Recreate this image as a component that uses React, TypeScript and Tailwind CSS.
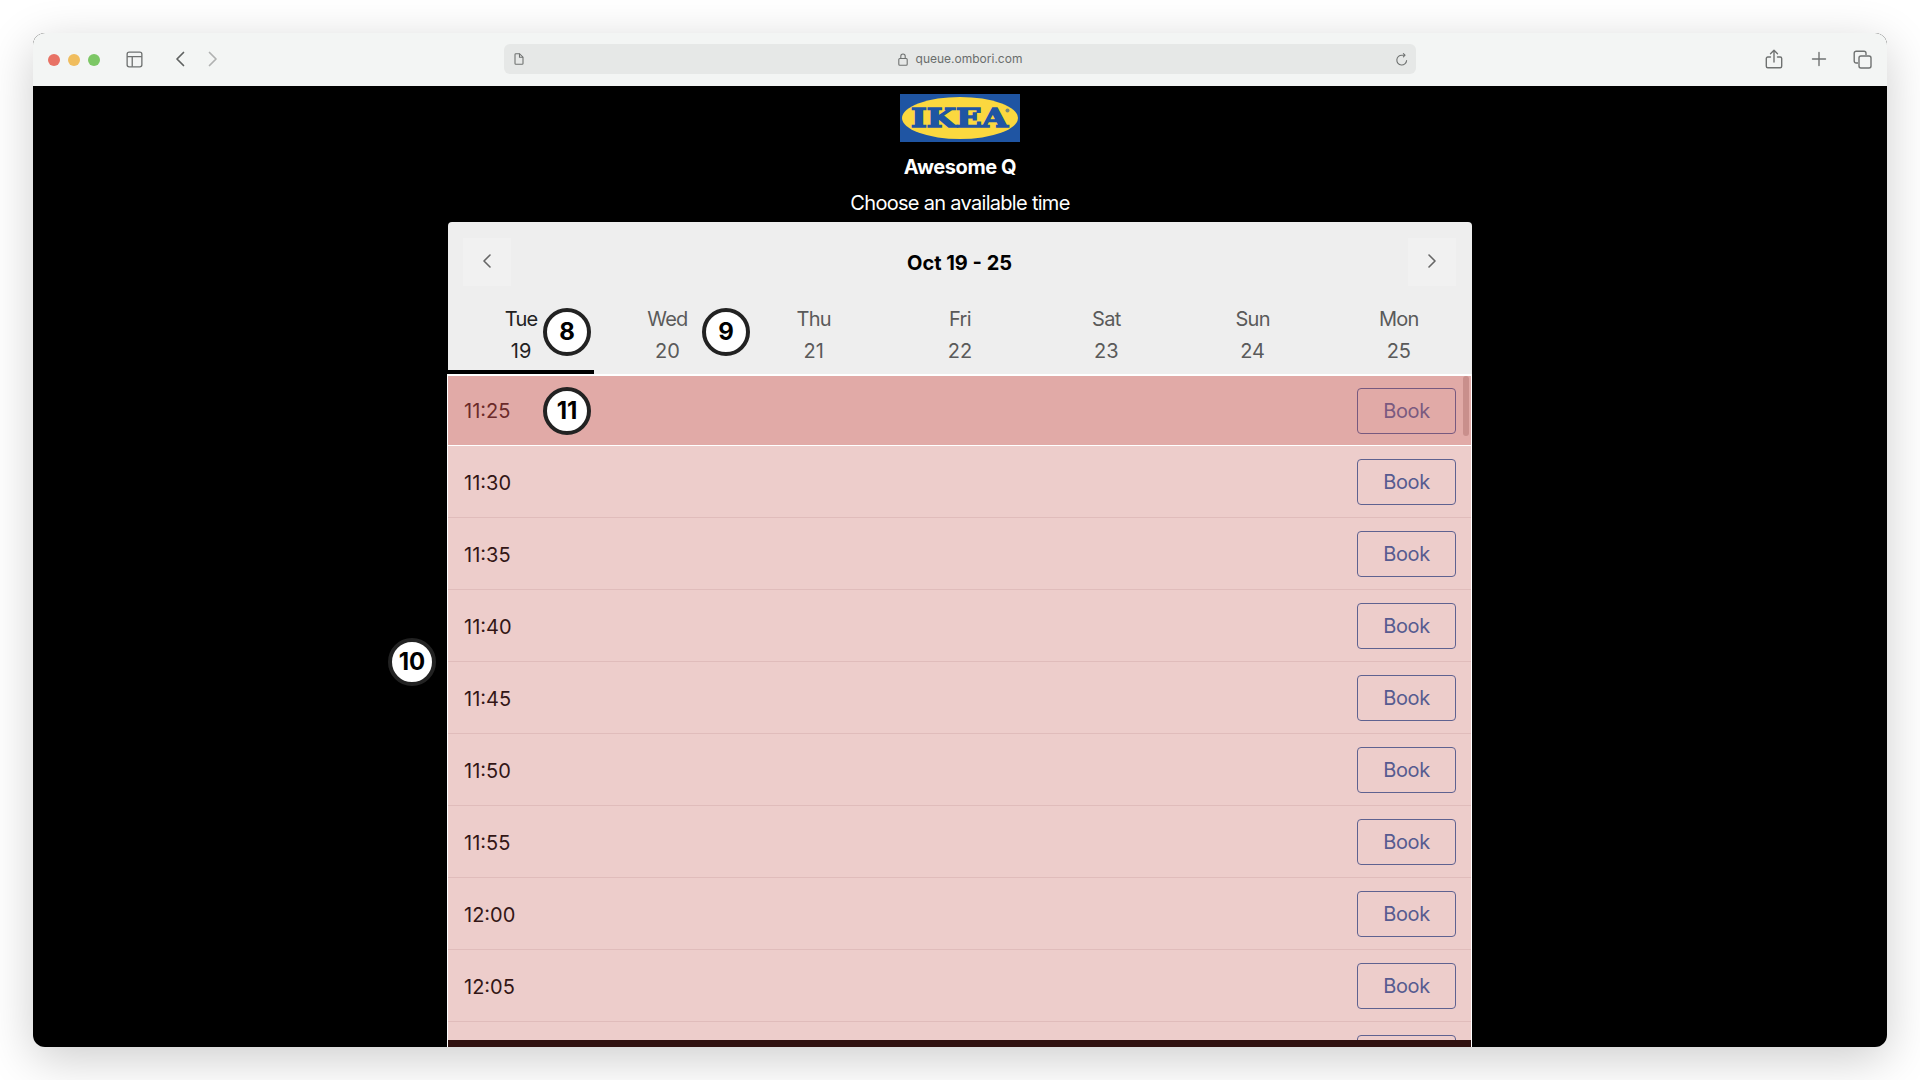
const days = [
  ["Tue", "19"],
  ["Wed", "20"],
  ["Thu", "21"],
  ["Fri", "22"],
  ["Sat", "23"],
  ["Sun", "24"],
  ["Mon", "25"],
];
const times = ["11:30", "11:35", "11:40", "11:45", "11:50", "11:55", "12:00", "12:05"];

function Badge({ n, className }: { n: string; className: string }) {
  return (
    <div
      className={`absolute z-10 w-12 h-12 rounded-full bg-white border-4 border-[#222222] flex items-center justify-center text-[24px] leading-none font-bold text-black ${className}`}
    >
      {n}
    </div>
  );
}

function Logo() {
  return (
    <svg width="120" height="48" viewBox="0 0 120 48" className="block">
      <rect width="120" height="48" fill="#1f55a3" />
      <ellipse cx="60" cy="24" rx="58" ry="21" fill="#fbd83f" />
      <text
        x="11"
        y="33"
        textLength="97"
        lengthAdjust="spacingAndGlyphs"
        fontFamily="'DejaVu Serif', serif"
        fontWeight="700"
        fontSize="26"
        fill="#1f55a3"
        stroke="#1f55a3"
        strokeWidth="1.5"
      >
        IKEA
      </text>
      <circle cx="107.5" cy="16.5" r="2" fill="#1f55a3" opacity="0.6" />
    </svg>
  );
}

function Toolbar() {
  const c = "#6f7271";
  return (
    <div className="h-[53px] shrink-0 bg-[#f3f5f4] flex items-center pl-[15px] pr-[15px] relative">
      <div className="flex items-center gap-2 w-[78px] shrink-0">
        <span className="w-3 h-3 rounded-full bg-[#e87265]" />
        <span className="w-3 h-3 rounded-full bg-[#f0bd5e]" />
        <span className="w-3 h-3 rounded-full bg-[#7cc765]" />
      </div>
      <svg width="17" height="17" viewBox="0 0 18 18" fill="none" stroke={c} strokeWidth="1.4" className="shrink-0 -mt-[1px]">
        <rect x="1.2" y="1.2" width="15.6" height="15.6" rx="2.2" />
        <path d="M1.2 6h15.6M6.6 6v10.8" />
      </svg>
      <svg width="12" height="16" viewBox="0 0 12 16" fill="none" stroke="#5f6261" strokeWidth="1.7" strokeLinecap="round" strokeLinejoin="round" className="ml-[31px] shrink-0 -mt-[1px]">
        <path d="M9.5 1.5 3 8l6.5 6.5" />
      </svg>
      <svg width="12" height="16" viewBox="0 0 12 16" fill="none" stroke="#b0b2b1" strokeWidth="1.7" strokeLinecap="round" strokeLinejoin="round" className="ml-[21px] shrink-0 -mt-[1px]">
        <path d="M2.5 1.5 9 8l-6.5 6.5" />
      </svg>
      <div className="ml-[285px] w-[912px] h-[30px] -mt-[1px] shrink-0 rounded-md bg-[#e6e8e7] flex items-center justify-between pl-[10px] pr-[8px] relative">
        <svg width="10" height="12" viewBox="0 0 10 12" fill="none" stroke={c} strokeWidth="1.1">
          <path d="M1 1.6a.9.9 0 0 1 .9-.9h3.6L9 4.2v6.2a.9.9 0 0 1-.9.9H1.9a.9.9 0 0 1-.9-.9z" />
          <path d="M5.5.7v3.5H9" />
        </svg>
        <div className="flex items-center gap-[8px] text-[12px] leading-none text-[#6a6d6c]">
          <svg width="10" height="13" viewBox="0 0 10 13" fill="none" stroke={c} strokeWidth="1.1">
            <rect x="0.8" y="5.5" width="8.4" height="6.8" rx="1" />
            <path d="M2.8 5.5V3.2a2.2 2.2 0 0 1 4.4 0v2.3" />
          </svg>
          <span>queue.ombori.com</span>
        </div>
        <svg width="12" height="13" viewBox="0 0 12 13" fill="none" stroke={c} strokeWidth="1.1" strokeLinecap="round" strokeLinejoin="round">
          <path d="M10.6 7.6A4.9 4.9 0 1 1 6 2.2h2.6" />
          <path d="M7.4.6 9 2.2 7.4 3.8" />
        </svg>
      </div>
      <svg width="18" height="20" viewBox="0 0 18 20" fill="none" stroke={c} strokeWidth="1.4" strokeLinecap="round" strokeLinejoin="round" className="ml-[349px] shrink-0 -mt-[1px]">
        <path d="M5.5 8H2.8A1.5 1.5 0 0 0 1.3 9.5v7.7a1.5 1.5 0 0 0 1.5 1.5h12.4a1.5 1.5 0 0 0 1.5-1.5V9.5A1.5 1.5 0 0 0 15.2 8h-2.7" />
        <path d="M9 13V1.5M5.5 4.8 9 1.3l3.5 3.5" />
      </svg>
      <svg width="16" height="16" viewBox="0 0 16 16" fill="none" stroke={c} strokeWidth="1.4" strokeLinecap="round" className="ml-[28px] shrink-0 -mt-[1px]">
        <path d="M8 1.5v13M1.5 8h13" />
      </svg>
      <svg width="19" height="19" viewBox="0 0 19 19" fill="none" stroke={c} strokeWidth="1.4" className="ml-[26px] shrink-0 -mt-[1px]">
        <path d="M5 13H3.2A2 2 0 0 1 1.2 11V3.2a2 2 0 0 1 2-2H11a2 2 0 0 1 2 2V5" />
        <rect x="6" y="6" width="12" height="12" rx="2" />
      </svg>
    </div>
  );
}

function BookButton({ dim }: { dim?: boolean }) {
  return (
    <button
      className={`w-[99px] h-[46px] rounded-[4px] border pt-px text-[20px] leading-none tracking-[-0.02em] ${
        dim ? "border-[#77597f] text-[#7a5a80]" : "border-[#5f6290] text-[#565b90]"
      }`}
    >
      Book
    </button>
  );
}

export default function App() {
  return (
    <div className="w-[1920px] h-[1080px] bg-white p-[33px] overflow-hidden font-['Inter','Liberation_Sans',sans-serif]">
      <div className="w-[1854px] h-[1014px] rounded-[12px] overflow-hidden flex flex-col bg-black shadow-[0_12px_48px_rgba(0,0,0,0.2)]">
        <Toolbar />
        <main className="relative flex-1 min-h-0 flex flex-col items-center pt-2 text-white">
          <Logo />
          <h1 className="mt-[10px] text-[20px] leading-[30px] font-bold tracking-[-0.02em]">Awesome Q</h1>
          <p className="mt-[6px] mb-[4px] text-[20px] leading-[30px] tracking-[-0.035em]">Choose an available time</p>
          <section className="relative w-[1024px] flex-1 min-h-0 flex flex-col text-[#222222]">
            <div className="bg-[#eeeeee] rounded-t-[4px] shrink-0">
              <div className="flex items-center justify-between pt-4 pl-[15px] pr-[16px]">
                <div className="w-12 h-12 bg-[#f1f1f1] flex items-center justify-center pb-[2px]">
                  <svg width="10" height="16" viewBox="0 0 10 16" fill="none" stroke="#666666" strokeWidth="1.6" strokeLinecap="round" strokeLinejoin="round">
                    <path d="M8 2 2 8l6 6" />
                  </svg>
                </div>
                <h2 className="text-[20px] leading-[30px] pt-px font-bold text-black">Oct 19 - 25</h2>
                <div className="w-12 h-12 bg-[#f1f1f1] flex items-center justify-center pb-[2px]">
                  <svg width="10" height="16" viewBox="0 0 10 16" fill="none" stroke="#666666" strokeWidth="1.6" strokeLinecap="round" strokeLinejoin="round">
                    <path d="m2 2 6 6-6 6" />
                  </svg>
                </div>
              </div>
              <div className="grid grid-cols-7 mt-4">
                {days.map(([d, n], i) => (
                  <div
                    key={d}
                    className={`flex flex-col items-center text-[20px] leading-[32px] pt-px pb-[3px] border-b-4 ${
                      i === 0 ? "border-black text-[#222222]" : "border-transparent text-[#5a5a5a]"
                    }`}
                  >
                    <span className="tracking-[-0.035em]">{d}</span>
                    <span>{n}</span>
                  </div>
                ))}
              </div>
            </div>
            <div className="relative -ml-px w-[1025px] flex-1 min-h-0 flex flex-col bg-white pt-[2px] border-l border-r border-white">
              <div className="flex-1 min-h-0 overflow-hidden">
                <div className="h-[70px] bg-[#e1aaa7] border-b border-white flex items-center justify-between pl-4 pr-[15px] text-[20px] text-[#6b2a2a]">
                  <span>11:25</span>
                  <BookButton dim />
                </div>
                {times.map((t) => (
                  <div
                    key={t}
                    className="h-[72px] bg-[#edcdcb] border-b border-[#e0bcbb] flex items-center justify-between pl-4 pr-[15px] text-[20px] text-[#331616]"
                  >
                    <span className="pt-[2px]">{t}</span>
                    <BookButton />
                  </div>
                ))}
                <div className="h-[72px] bg-[#edcdcb] flex items-center justify-end pl-4 pr-[15px]">
                  <BookButton />
                </div>
              </div>
              <div className="h-[7px] shrink-0 bg-[#30110f]" />
              <div className="absolute right-[2px] top-[2px] w-[6px] h-[60px] rounded-full bg-[#c98f8c]" />
            </div>
            <Badge n="8" className="left-[95px] top-[86px]" />
            <Badge n="9" className="left-[254px] top-[86px]" />
            <Badge n="11" className="left-[95px] top-[165px]" />
          </section>
          <Badge n="10" className="left-[355px] top-[552px]" />
        </main>
      </div>
    </div>
  );
}
